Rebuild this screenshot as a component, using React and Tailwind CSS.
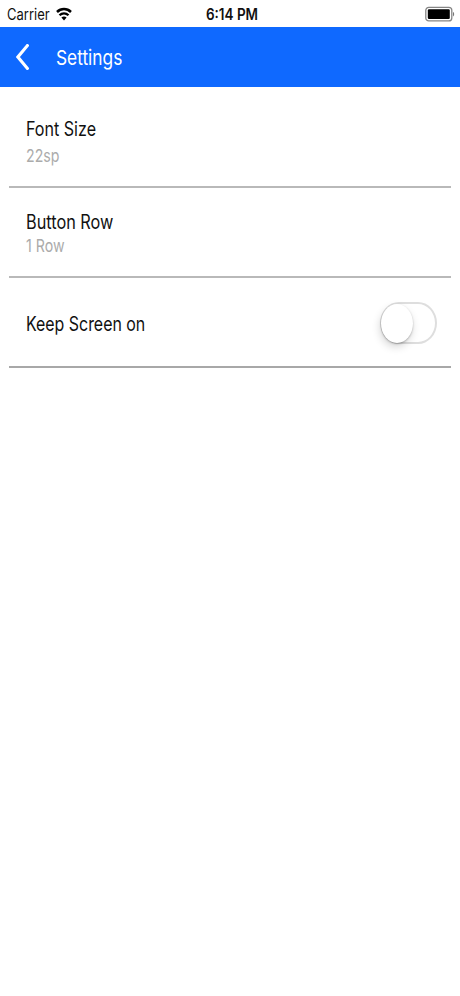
import React, { useState } from 'react';

function StatusBar() {
  return (
    <div className="grid h-[27px] grid-cols-3 items-center bg-white pl-[7px] pr-[5px] pt-[2px] text-[15.5px] leading-none text-[#111]">
      <div className="flex items-center">
        <span className="w-[49px] origin-left scale-x-[0.84] whitespace-nowrap">Carrier</span>
        <svg width="16" height="14" viewBox="0 0 16 14" className="mb-[2px]">
          <path d="M1 5C5 1.1 11 1.1 15 5" fill="none" stroke="#000" strokeWidth="2.5" />
          <path d="M3.5 8.3C6.1 5.7 9.9 5.7 12.5 8.3" fill="none" stroke="#000" strokeWidth="2.3" />
          <path d="M8 13.6 5.4 10.6C7 9.2 9 9.2 10.6 10.6Z" fill="#000" />
        </svg>
      </div>
      <div className="flex justify-center">
        <span className="ml-[2px] scale-x-[0.87] whitespace-nowrap font-semibold">6:14 PM</span>
      </div>
      <div className="flex justify-end">
        <svg width="30" height="16" viewBox="0 0 30 16" className="mb-[2px]">
          <rect x="0.8" y="1.3" width="26" height="13.6" rx="3" fill="#fff" stroke="#858585" strokeWidth="1.3" />
          <rect x="2.8" y="3.2" width="22" height="9.8" rx="1.2" fill="#000" />
          <path d="M28 6v4.4c1.5-.5 1.5-3.9 0-4.4Z" fill="#777" />
        </svg>
      </div>
    </div>
  );
}

function Header() {
  return (
    <header className="flex h-[60px] items-center bg-[#0f69ff] pl-4 text-white">
      <button aria-label="Back" className="mr-[27px]">
        <svg width="13" height="26" viewBox="0 0 13 26">
          <path d="M11.4 1.6 1.9 13l9.5 11.4" fill="none" stroke="#fff" strokeWidth="3.1" strokeLinecap="square" />
        </svg>
      </button>
      <h1 className="mt-[2px] origin-left scale-x-[0.845] text-[20.5px] leading-6">Settings</h1>
    </header>
  );
}

function Toggle({ checked, onChange }) {
  return (
    <button
      role="switch"
      aria-checked={checked}
      onClick={() => onChange(!checked)}
      className={`flex h-[42px] w-[57px] items-center rounded-[19px/21px] border-2 border-[#dedede] bg-white ${
        checked ? 'justify-end' : 'justify-start'
      }`}
    >
      <span className="-ml-px h-[39px] w-[32px] shrink-0 rounded-[50%] bg-white shadow-[-1px_4px_8px_rgba(0,0,0,0.16),0_1px_2px_rgba(0,0,0,0.25)]" />
    </button>
  );
}

function SettingsPage() {
  const [keepOn, setKeepOn] = useState(false);

  return (
    <main className="px-[9px]">
      <section className="h-[101px] border-b-2 border-[#b9b9b9] pl-[17px] pt-[30px]">
        <h2 className="w-fit origin-left scale-x-[0.825] text-[19.5px] leading-6">Font Size</h2>
        <p className="mt-[5px] w-fit origin-left scale-x-[0.81] text-[17.5px] leading-5 text-[#ababab]">22sp</p>
      </section>

      <section className="h-[90px] border-b-2 border-[#b9b9b9] pl-[17px] pt-[22px]">
        <h2 className="w-fit origin-left scale-x-[0.835] text-[19.5px] leading-6">Button Row</h2>
        <p className="mt-[2px] w-fit origin-left scale-x-[0.81] text-[17.5px] leading-5 text-[#ababab]">1 Row</p>
      </section>

      <section className="flex h-[90px] items-center justify-between border-b-2 border-[#a8a8a8] pl-[17px] pr-[14px] pt-[2px]">
        <h2 className="mt-[2px] origin-left scale-x-[0.816] text-[19.5px] leading-6">Keep Screen on</h2>
        <Toggle checked={keepOn} onChange={setKeepOn} />
      </section>
    </main>
  );
}

export default function App() {
  return (
    <div className="min-h-screen bg-white font-['Inter','Liberation_Sans',sans-serif] text-[#111]">
      <StatusBar />
      <Header />
      <SettingsPage />
    </div>
  );
}
